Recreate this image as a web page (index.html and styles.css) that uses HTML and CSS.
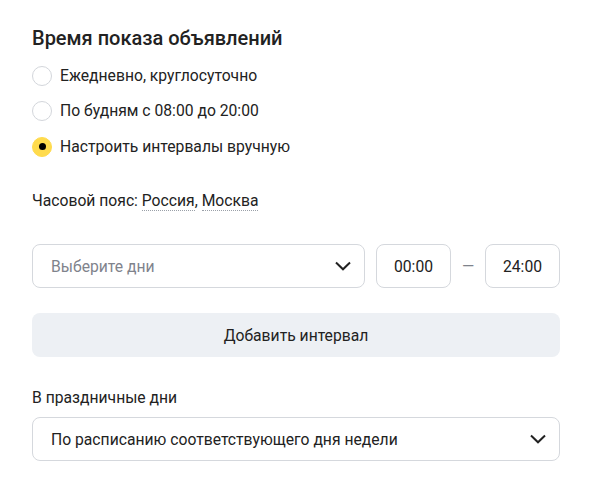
FILE: index.html
```html
<!DOCTYPE html>
<html lang="ru">
<head>
<meta charset="utf-8">
<link rel="stylesheet" href="styles.css">
</head>
<body>
<div class="panel">
  <h2 class="title">Время показа объявлений</h2>
  <div class="radios">
    <label class="radio"><span class="dot"></span><span>Ежедневно, круглосуточно</span></label>
    <label class="radio"><span class="dot"></span><span>По будням с 08:00 до 20:00</span></label>
    <label class="radio checked"><span class="dot"></span><span>Настроить интервалы вручную</span></label>
  </div>
  <div class="tz">Часовой пояс: <span class="link">Россия</span>, <span class="link">Москва</span></div>
  <div class="interval">
    <div class="select days">
      <span class="placeholder">Выберите дни</span>
      <svg class="chev" width="16" height="10" viewBox="0 0 16 10"><path d="M1 1.5 L8 8.3 L15 1.5" fill="none" stroke="#222" stroke-width="2"/></svg>
    </div>
    <div class="time">00:00</div>
    <div class="dash">—</div>
    <div class="time">24:00</div>
  </div>
  <button class="add">Добавить интервал</button>
  <div class="label">В праздничные дни</div>
  <div class="select holiday">
    <span>По расписанию соответствующего дня недели</span>
    <svg class="chev" width="16" height="10" viewBox="0 0 16 10"><path d="M1 1.5 L8 8.3 L15 1.5" fill="none" stroke="#222" stroke-width="2"/></svg>
  </div>
</div>
</body>
</html>
```
FILE: styles.css
```css
* { box-sizing: border-box; }
body {
  margin: 0;
  background: #fff;
  font-family: Roboto, "Noto Sans", sans-serif;
  color: #222;
  font-size: 15.7px;
}
.panel {
  width: 560px;
  padding: 26px 0 0 32px;
}
.title {
  margin: 0;
  font-size: 20px;
  font-weight: 500;
  line-height: 24px;
  color: #222;
}
.radios {
  margin-top: 8px;
}
.radio {
  display: flex;
  align-items: center;
  height: 35.5px;
  gap: 8px;
  line-height: 20px;
}
.dot {
  width: 20px;
  height: 20px;
  border-radius: 50%;
  border: 1px solid #d3d6db;
  background: #fff;
  display: flex;
  align-items: center;
  justify-content: center;
}
.checked .dot {
  background: #ffdb4d;
  border-color: #ffdb4d;
}
.checked .dot::after {
  content: "";
  width: 7px;
  height: 7px;
  border-radius: 50%;
  background: #000;
}
.tz {
  margin-top: 26.5px;
  line-height: 20px;
}
.link {
  border-bottom: 1px dotted #9aa0a8;
}
.interval {
  margin-top: 33px;
  display: flex;
  align-items: center;
  height: 44px;
}
.select {
  height: 44px;
  border: 1px solid #d5d8dd;
  border-radius: 8px;
  display: flex;
  align-items: center;
  justify-content: space-between;
  padding: 0 13px 0 18px;
}
.days {
  width: 333px;
}
.placeholder {
  color: #7f838c;
}
.time {
  margin-left: 11px;
  width: 75px;
  height: 44px;
  border: 1px solid #d5d8dd;
  border-radius: 8px;
  display: flex;
  align-items: center;
  justify-content: center;
}
.dash {
  width: 34px;
  margin-right: -11px;
  text-align: center;
  color: #7f838c;
}
.add {
  display: block;
  margin-top: 25px;
  width: 528px;
  height: 44px;
  border: none;
  border-radius: 8px;
  background: #edf0f4;
  font-family: inherit;
  font-size: 15.7px;
  color: #222;
}
.label {
  margin-top: 31px;
  line-height: 20px;
}
.holiday {
  margin-top: 9px;
  width: 528px;
}
```
